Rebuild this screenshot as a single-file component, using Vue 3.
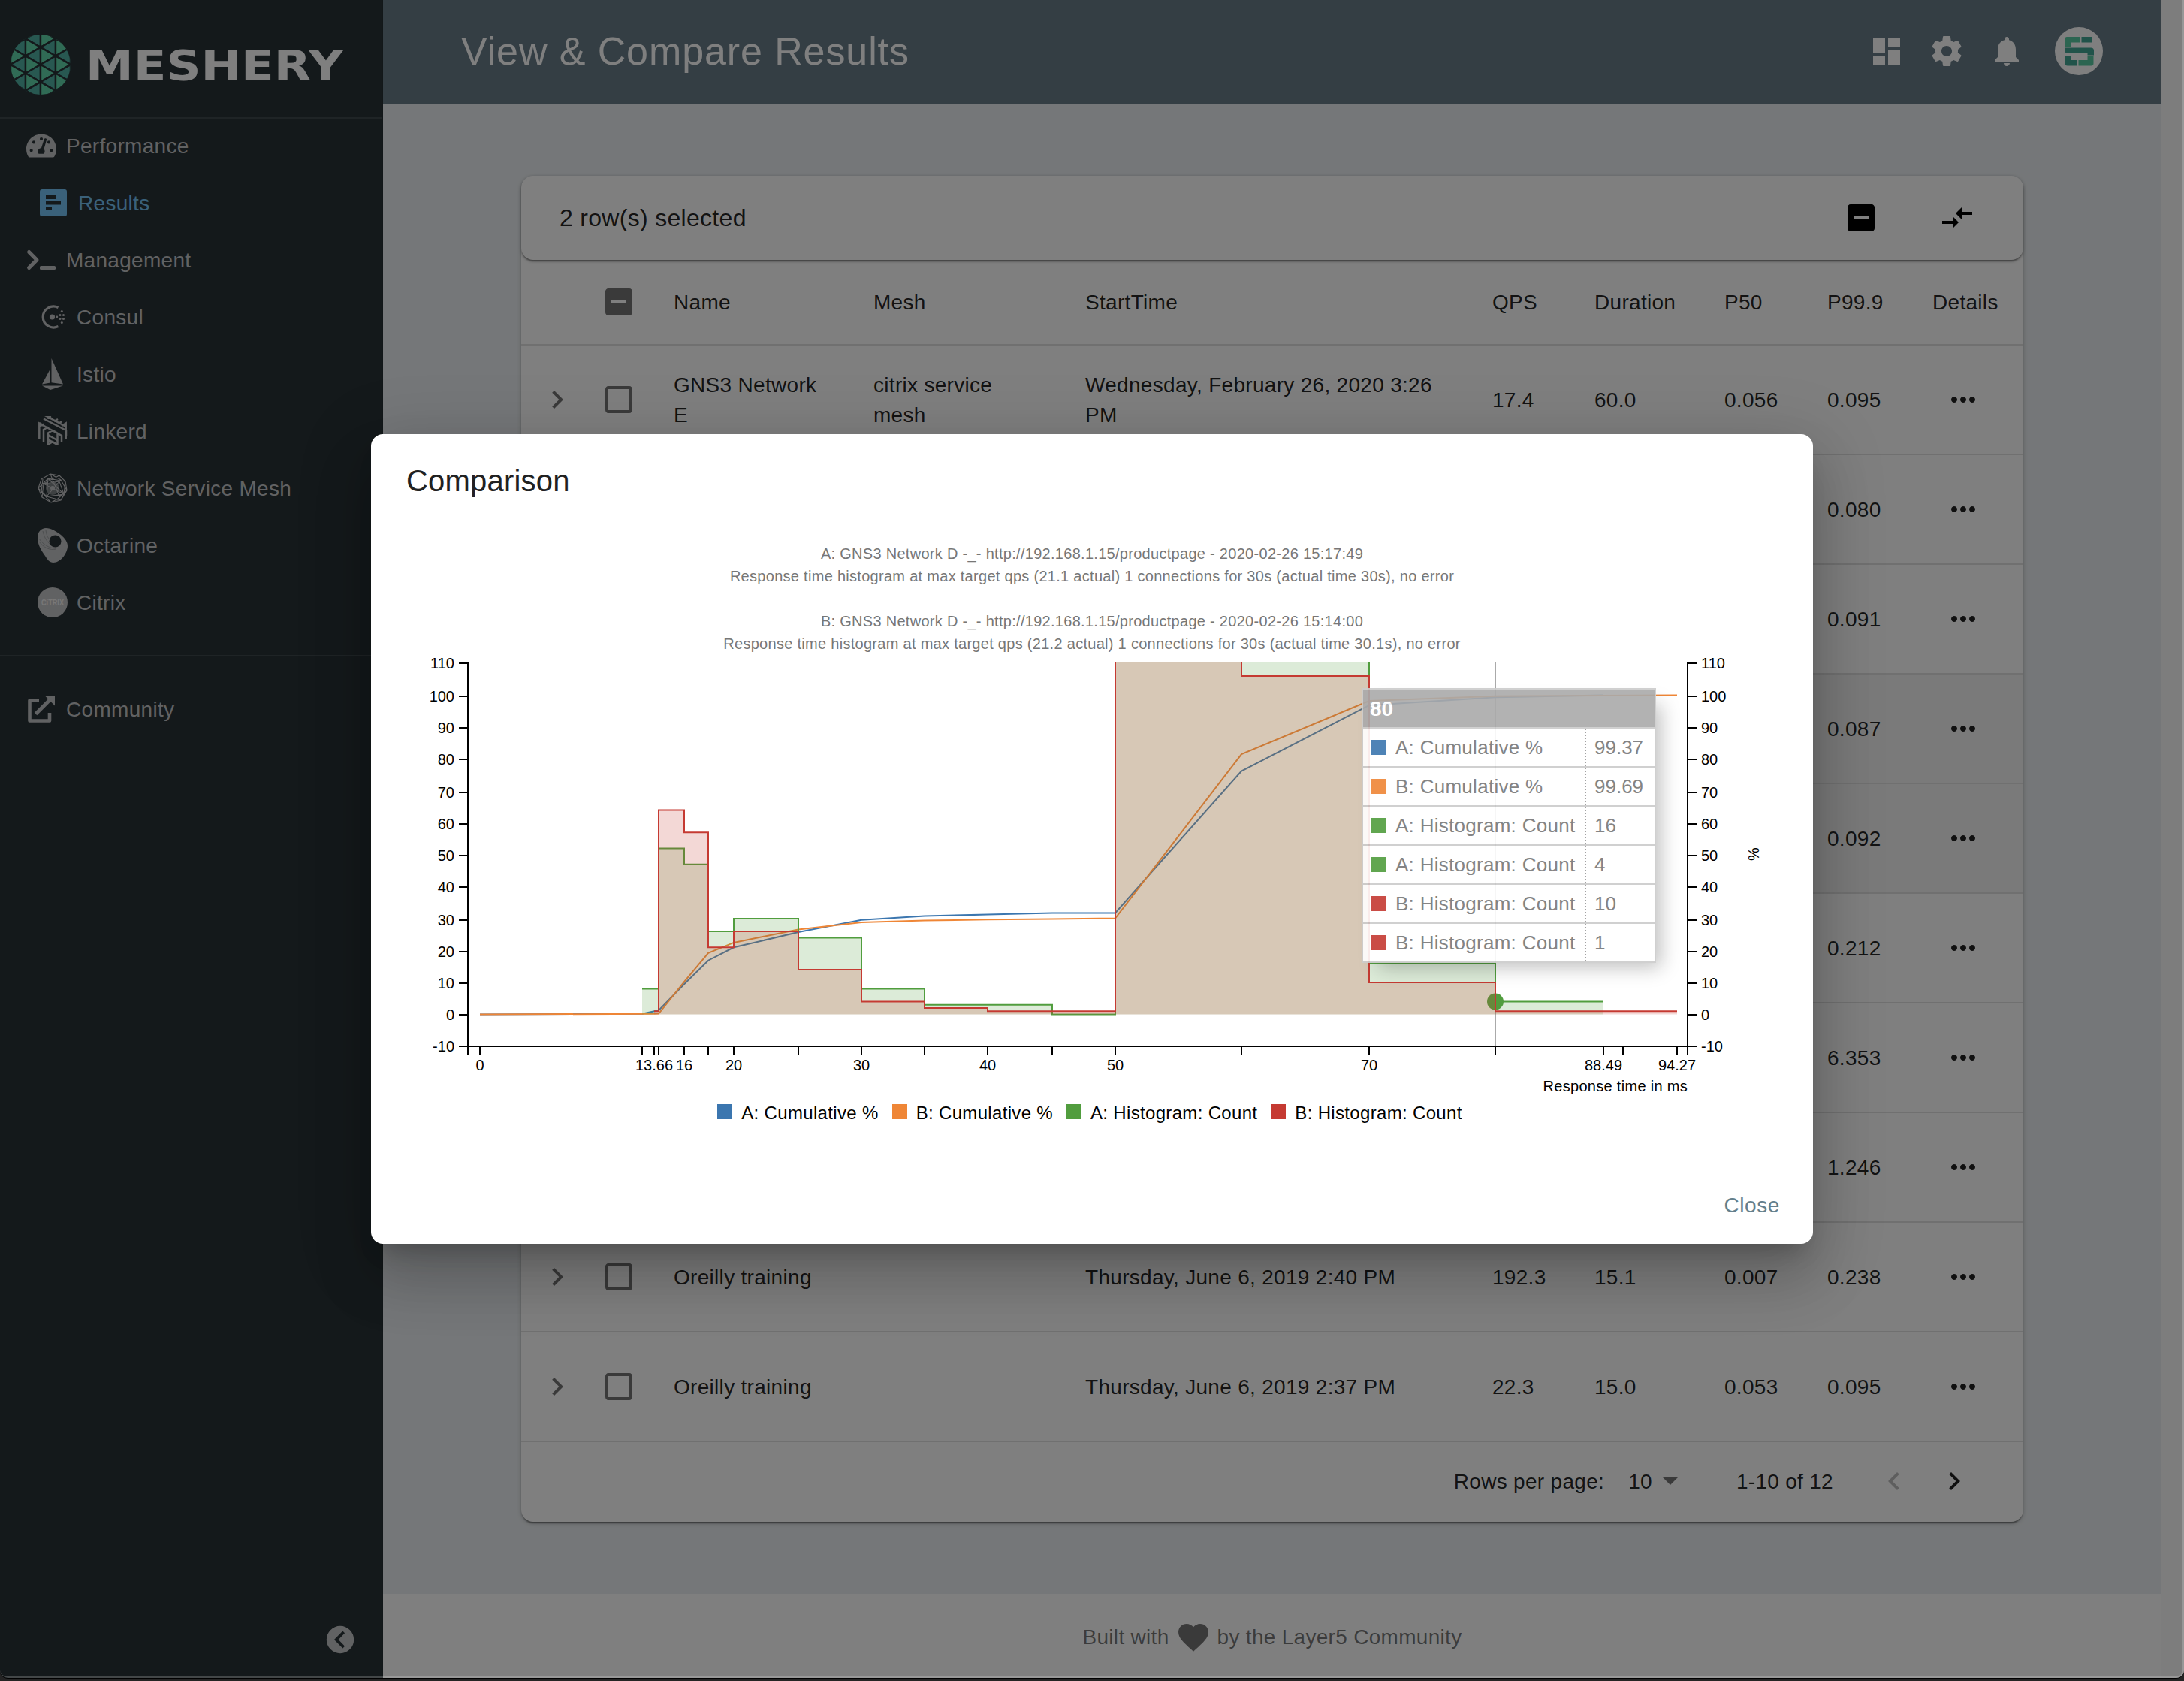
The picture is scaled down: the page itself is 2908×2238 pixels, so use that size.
<script setup>
const ICONS = {
  dashboard: 'M3 13h8V3H3v10zm0 8h8v-6H3v6zm10 0h8V11h-8v10zm0-18v6h8V3h-8z',
  settings: 'M19.43 12.98c.04-.32.07-.64.07-.98s-.03-.66-.07-.98l2.11-1.65c.19-.15.24-.42.12-.64l-2-3.46c-.12-.22-.39-.3-.61-.22l-2.49 1c-.52-.4-1.08-.73-1.69-.98l-.38-2.65C14.46 2.18 14.25 2 14 2h-4c-.25 0-.46.18-.49.42l-.38 2.65c-.61.25-1.17.59-1.69.98l-2.49-1c-.23-.09-.49 0-.61.22l-2 3.46c-.13.22-.07.49.12.64l2.11 1.65c-.04.32-.07.65-.07.98s.03.66.07.98l-2.11 1.65c-.19.15-.24.42-.12.64l2 3.46c.12.22.39.3.61.22l2.49-1c.52.4 1.08.73 1.69.98l.38 2.65c.03.24.24.42.49.42h4c.25 0 .46-.18.49-.42l.38-2.65c.61-.25 1.17-.59 1.69-.98l2.49 1c.23.09.49 0 .61-.22l2-3.46c.12-.22.07-.49-.12-.64l-2.11-1.65zM12 15.5c-1.93 0-3.5-1.57-3.5-3.5s1.57-3.5 3.5-3.5 3.5 1.57 3.5 3.5-1.57 3.5-3.5 3.5z',
  bell: 'M12 22c1.1 0 2-.9 2-2h-4c0 1.1.89 2 2 2zm6-6v-5c0-3.07-1.64-5.64-4.5-6.32V4c0-.83-.67-1.5-1.5-1.5s-1.5.67-1.5 1.5v.68C7.63 5.36 6 7.92 6 11v5l-2 2v1h16v-1l-2-2z',
  indeterminate: 'M19 3H5c-1.1 0-2 .9-2 2v14c0 1.1.9 2 2 2h14c1.1 0 2-.9 2-2V5c0-1.1-.9-2-2-2zm-2 10H7v-2h10v2z',
  unchecked: 'M19 5v14H5V5h14m0-2H5c-1.1 0-2 .9-2 2v14c0 1.1.9 2 2 2h14c1.1 0 2-.9 2-2V5c0-1.1-.9-2-2-2z',
  compare: 'M9.01 14H2v2h7.01v3L13 15l-3.99-4v3zm5.98-1v-3H22V8h-7.01V5L11 9l3.99 4z',
  right: 'M10 6L8.59 7.41 13.17 12l-4.58 4.59L10 18l6-6z',
  left: 'M15.41 7.41L14 6l-6 6 6 6 1.41-1.41L10.83 12z',
  more: 'M6 10c-1.1 0-2 .9-2 2s.9 2 2 2 2-.9 2-2-.9-2-2-2zm12 0c-1.1 0-2 .9-2 2s.9 2 2 2 2-.9 2-2-.9-2-2-2zm-6 0c-1.1 0-2 .9-2 2s.9 2 2 2 2-.9 2-2-.9-2-2-2z',
  heart: 'M12 21.35l-1.45-1.32C5.4 15.36 2 12.28 2 8.5 2 5.42 4.42 3 7.5 3c1.74 0 3.41.81 4.5 2.09C13.09 3.81 14.76 3 16.5 3 19.58 3 22 5.42 22 8.5c0 3.78-3.4 6.86-8.55 11.54L12 21.35z',
}

const meshes = [
  { id: 'consul', label: 'Consul' },
  { id: 'istio', label: 'Istio' },
  { id: 'linkerd', label: 'Linkerd' },
  { id: 'nsm', label: 'Network Service Mesh' },
  { id: 'octarine', label: 'Octarine' },
  { id: 'citrix', label: 'Citrix' },
]

const columns = ['Name', 'Mesh', 'StartTime', 'QPS', 'Duration', 'P50', 'P99.9']
const blank = ['', '', '', '', '', '']
const rows = [
  { cells: ['GNS3 Network E', 'citrix service mesh', 'Wednesday, February 26, 2020 3:26 PM', '17.4', '60.0', '0.056', '0.095'] },
  { cells: [...blank, '0.080'] },
  { cells: [...blank, '0.091'] },
  { cells: [...blank, '0.087'], selected: true },
  { cells: [...blank, '0.092'], selected: true },
  { cells: [...blank, '0.212'] },
  { cells: [...blank, '6.353'] },
  { cells: [...blank, '1.246'] },
  { cells: ['Oreilly training', '', 'Thursday, June 6, 2019 2:40 PM', '192.3', '15.1', '0.007', '0.238'] },
  { cells: ['Oreilly training', '', 'Thursday, June 6, 2019 2:37 PM', '22.3', '15.0', '0.053', '0.095'] },
]

/* Logo lattice: equilateral triangles in columns of 20px, clipped to a circle. */
const tri = []
const H = 23.1
for (let c = 0; c < 4; c++) {
  for (let k = -3; k < 4; k++) {
    const x0 = c * 20
    const x1 = x0 + 20
    const off = c % 2 === 0 ? 0 : H / 2
    const y = 40 + k * H + off
    tri.push({ p: `${x0},${y - H} ${x0},${y} ${x1},${y - H / 2}`, light: true })
    tri.push({ p: `${x1},${y - H / 2} ${x1},${y + H / 2} ${x0},${y}`, light: false })
  }
}

/* Chart geometry, relative to the dialog's top left corner. x snaps up to the 2px grid. */
const Y0 = 772.5
const sx = (v) => Math.ceil((143.7 + v * 16.9) / 2) * 2 + 1
const sy = (v) => Y0 - v * 4.25
const tickY = (v) => {
  if (v === 110) return 305
  if (v === -10) return 815
  return Math.ceil((sy(v) - 0.9) / 2) * 2 + 1
}

const yTicks = Array.from({ length: 13 }, (_, i) => i * 10 - 10)
const xTicks = [
  [0, '0'], [12.77, ''], [13.66, '13.66'], [14, ''], [16, '16'], [18, ''], [20, '20'], [25, ''],
  [30, '30'], [35, ''], [40, '40'], [45, ''], [50, '50'], [60, ''], [70, '70'], [80, ''],
  [88.49, '88.49'], [90, ''], [94.27, '94.27'],
]

const cumA = [[0, 0], [12.77, 0.16], [14, 1.26], [16, 9.48], [18, 16.9], [20, 21], [25, 25.75], [30, 29.6], [35, 30.8], [40, 31.3], [45, 31.8], [50, 31.8], [60, 76.2], [70, 96.84], [80, 99.37], [88.49, 100]]
const cumB = [[0, 0], [13.66, 0.16], [14, 0.2], [16, 10.2], [18, 19.2], [20, 22.5], [25, 26.6], [30, 28.8], [35, 29.4], [40, 29.7], [45, 29.9], [50, 30.1], [60, 81.5], [70, 98.2], [80, 99.69], [94.27, 100]]
const histA = [[12.77, 8], [14, 52], [16, 47], [18, 26], [20, 30], [25, 24], [30, 8], [35, 3], [45, 0], [50, 281], [60, 131], [70, 16], [80, 4], [88.49, 4]]
const histB = [[13.66, 1], [14, 64], [16, 57], [18, 21], [20, 26], [25, 14], [30, 4], [35, 2], [40, 1], [50, 328], [60, 106], [70, 10], [80, 1], [94.27, 1]]

const line = (pts) => 'M' + pts.map(([x, y]) => `${sx(x)} ${sy(y).toFixed(1)}`).join('L')
const step = (pts) =>
  pts.reduce((d, [x, y], i) => (i === 0 ? `M${sx(x)} ${sy(y)}` : `${d}H${sx(x)}V${sy(y)}`), '')
const area = (pts) => `${step(pts)}V${Y0}H${sx(pts[0][0])}Z`

const legend = [
  { c: 'blue', t: 'A: Cumulative %' },
  { c: 'orange', t: 'B: Cumulative %' },
  { c: 'green', t: 'A: Histogram: Count' },
  { c: 'red', t: 'B: Histogram: Count' },
]
const tip = [
  { c: 'blue', t: 'A: Cumulative %', v: '99.37' },
  { c: 'orange', t: 'B: Cumulative %', v: '99.69' },
  { c: 'green', t: 'A: Histogram: Count', v: '16' },
  { c: 'green', t: 'A: Histogram: Count', v: '4' },
  { c: 'red', t: 'B: Histogram: Count', v: '10' },
  { c: 'red', t: 'B: Histogram: Count', v: '1' },
]
</script>

<template>
  <div class="screen">
    <div class="window">
      <aside class="sidebar">
        <div class="brand">
          <svg class="brand-mark" viewBox="0 0 80 80">
            <clipPath id="disc"><circle cx="40" cy="40" r="40" /></clipPath>
            <g clip-path="url(#disc)">
              <polygon v-for="(t, i) in tri" :key="i" :points="t.p" :class="t.light ? 'tri-light' : 'tri-dark'" />
            </g>
          </svg>
          <svg class="brand-name" viewBox="0 0 340 60">
            <text x="-4" y="50" textLength="343" lengthAdjust="spacingAndGlyphs">MESHERY</text>
          </svg>
        </div>
        <nav class="nav">
          <div class="item">
            <svg class="ico" width="40" height="36" viewBox="0 0 576 512">
              <path fill-rule="evenodd" d="M288 32C129 32 0 161 0 320c0 53 14 102 39 145 6 10 16 15 27 15h444c11 0 21-5 27-15 25-43 39-92 39-145C576 161 447 32 288 32zM288 96a30 30 0 1 1 0 60 30 30 0 0 1 0-60zM96 376a30 30 0 1 1 0-60 30 30 0 0 1 0 60zM144 220a30 30 0 1 1 0-60 30 30 0 0 1 0 60zM480 376a30 30 0 1 1 0-60 30 30 0 0 1 0 60zM432 220a30 30 0 1 1 0-60 30 30 0 0 1 0 60zM390 140l-52 180c10 11 16 25 16 40 0 18-4 36-14 50H236c-9-14-13-32-12-50 2-32 28-56 64-60l56-172c8-22 52-12 46 12z" />
            </svg>
            <span class="main-label">Performance</span>
          </div>
          <div class="item sub active">
            <svg class="ico" width="36" height="36" viewBox="0 0 36 36">
              <path fill-rule="evenodd" d="M3 0h30a3 3 0 0 1 3 3v30a3 3 0 0 1-3 3H3a3 3 0 0 1-3-3V3a3 3 0 0 1 3-3zM8 8v5h13V8zM8 15.5v5h20v-5zM8 23v5h8v-5z" />
            </svg>
            <span>Results</span>
          </div>
          <div class="item">
            <svg class="ico" width="40" height="32" viewBox="0 0 40 32">
              <path d="M3.600 5.500L14 16 3.600 26.500" fill="none" stroke="currentColor" stroke-width="5" stroke-linecap="round" stroke-linejoin="round" />
              <rect x="18" y="24" width="21" height="5" rx="1.500" />
            </svg>
            <span class="main-label">Management</span>
          </div>
          <div v-for="m in meshes" :key="m.id" class="item sub">
            <svg v-if="m.id === 'consul'" class="ico" width="40" height="40" viewBox="0 0 40 40">
              <path d="M27.500 7.500A14 14 0 1 0 27.500 32.500" fill="none" stroke="currentColor" stroke-width="3.200" />
              <circle cx="19.500" cy="20" r="3.600" /><circle cx="25.800" cy="20" r="1.400" />
              <circle cx="30" cy="17.500" r="1.500" /><circle cx="30" cy="22.500" r="1.500" />
              <circle cx="34.500" cy="17.500" r="1.500" /><circle cx="34.500" cy="22.500" r="1.500" />
              <circle cx="32.300" cy="12.500" r="1.500" /><circle cx="32.300" cy="27.500" r="1.500" />
            </svg>
            <svg v-else-if="m.id === 'istio'" class="ico" width="40" height="42" viewBox="0 0 40 42">
              <path d="M18.500 0L34 34.500 18.500 32.300zM17 14v18.500L6 34.500zM6 36.500h28L17 42z" />
            </svg>
            <svg v-else-if="m.id === 'linkerd'" class="ico" width="40" height="40" viewBox="0 0 40 40">
              <g fill="none" stroke="currentColor" stroke-width="2.500">
                <path d="M2.300 30V9.500L32 26v9M2.300 14L8 10.500M2.300 9l5 3M8 34V18l6-3.500M14 38V22.500l6-3.500 6.500 3.800V38M14 25l12 7M14 31l12 7M14 38l6-4 6 4M37.700 30V9.500L32 13M37.700 14L8 -2M38 26V19L8 3.500M22 7l5-3M27.500 10l5-3M13 3l5-2.500" />
              </g>
            </svg>
            <svg v-else-if="m.id === 'nsm'" class="ico" width="40" height="40" viewBox="0 0 40 40">
              <circle cx="20" cy="20" r="9" opacity=".55" />
              <circle cx="20" cy="20" r="3" />
              <g fill="none" stroke="currentColor" stroke-width="1.100">
                <path d="M17 1L5 8 1 20l5 12 12 7 13-3 8-13-2-12-8-8zM17 1l14 8 8 14M5 8l12-7 12 30M1 20L14 7l23 4M6 32L8 14 29 3M18 39L5 25l2-17M31 36L12 31 1 20M39 23L27 34 18 39M37 11l-2 17-4 8M8 14l21-3 6 17-23 3-7-6M14 7l21 21M29 11L12 31M12 31L14 7M8 14l27 14" />
              </g>
            </svg>
            <svg v-else-if="m.id === 'octarine'" class="ico" width="40" height="46" viewBox="0 0 40 46">
              <path fill-rule="evenodd" d="M0 13C0 5 5 0 11 0c7 0 15 5 20 9 6 5 9 10 9 15 0 9-9 22-19 22-5 0-8-4-11-9C5 30 0 22 0 13zM31.500 17.500a8 8 0 1 0-16 0 8 8 0 0 0 16 0z" />
              <path d="M2 14c5 8 14 13 22 13M2 18c6 8 14 12 23 10M7 4c2 8 4 12 9 17M11 3c1 6 2 9 5 12" fill="none" class="groove" />
            </svg>
            <svg v-else class="ico" width="40" height="40" viewBox="0 0 40 40">
              <circle cx="20" cy="20" r="20" />
              <text class="citrix" x="20" y="23.500" textLength="30" lengthAdjust="spacingAndGlyphs">CiTRIX</text>
            </svg>
            <span>{{ m.label }}</span>
          </div>
        </nav>
        <div class="item community">
          <svg class="ico" width="40" height="40" viewBox="0 0 40 40">
            <path d="M17 8.500H4.500v27h26.500V25" fill="none" stroke="currentColor" stroke-width="4.600" stroke-linejoin="round" />
            <path d="M12.500 26.500L32 7" stroke="currentColor" stroke-width="5" />
            <path d="M24.500 2H38v13.500z" />
          </svg>
          <span class="main-label">Community</span>
        </div>
        <svg class="collapse" width="38" height="38" viewBox="0 0 38 38">
          <path fill-rule="evenodd" d="M19 .8a18.200 18.200 0 1 1 0 36.400A18.200 18.200 0 0 1 19 .8zM22.300 7.400L11 19l11.300 11.600 2.800-2.800-8.500-8.800 8.500-8.800z" />
        </svg>
      </aside>

      <div class="page">
        <header class="appbar">
          <h1>View &amp; Compare Results</h1>
          <div class="actions">
            <svg class="mi" viewBox="0 0 24 24"><path :d="ICONS.dashboard" /></svg>
            <svg class="mi" viewBox="0 0 24 24"><path :d="ICONS.settings" /></svg>
            <svg class="mi" viewBox="0 0 24 24"><path :d="ICONS.bell" /></svg>
            <svg class="avatar" viewBox="0 0 64 64">
              <circle cx="32" cy="32" r="32" class="av-bg" />
              <path class="av-a" d="M16 13h17.500v7.500H22V26h-8.500V15.500a2.500 2.500 0 0 1 2.500-2.500zM31.500 44H43.500V39h8v9.500a3 3 0 0 1-3 3H31.500z" />
              <path class="av-b" d="M35.500 13H50v7.500H35.500zM13.500 27.500H48a4 4 0 0 1 4 4v6h-8.500V35H17a3.500 3.500 0 0 1-3.500-3.500zM13.500 39h8.500v5h7.500v7.500H17a3.500 3.500 0 0 1-3.500-3.500z" />
            </svg>
          </div>
        </header>

        <main class="content">
          <section class="card">
            <div class="toolbar">
              <span class="selected-count">2 row(s) selected</span>
              <svg class="mi" viewBox="0 0 24 24"><path :d="ICONS.indeterminate" /></svg>
              <svg class="mi compare" viewBox="0 0 24 24"><path :d="ICONS.compare" /></svg>
            </div>
            <div class="row head">
              <div></div>
              <svg class="mi muted" viewBox="0 0 24 24"><path :d="ICONS.indeterminate" /></svg>
              <div v-for="c in columns" :key="c" class="cell">{{ c }}</div>
              <div class="cell">Details</div>
            </div>
            <div v-for="(r, i) in rows" :key="i" class="row" :class="{ picked: r.selected }">
              <svg class="mi muted expand" viewBox="0 0 24 24"><path :d="ICONS.right" /></svg>
              <svg class="mi muted" viewBox="0 0 24 24"><path :d="ICONS.unchecked" /></svg>
              <div v-for="(c, j) in r.cells" :key="j" class="cell">{{ c }}</div>
              <svg class="mi dots" viewBox="0 0 24 24"><path :d="ICONS.more" /></svg>
            </div>
            <div class="pager">
              <span class="per">Rows per page:</span>
              <span class="size">10</span>
              <svg class="caret" viewBox="0 0 20 10"><path d="M0 0h20L10 10z" /></svg>
              <span class="range">1-10 of 12</span>
              <svg class="mi off" viewBox="0 0 24 24"><path :d="ICONS.left" /></svg>
              <svg class="mi next" viewBox="0 0 24 24"><path :d="ICONS.right" /></svg>
            </div>
          </section>
        </main>

        <footer class="footer">
          <span>Built with</span>
          <svg class="mi" viewBox="0 0 24 24"><path :d="ICONS.heart" /></svg>
          <span>by the Layer5 Community</span>
        </footer>
      </div>
      <div class="scrollbar"></div>

      <div class="backdrop"></div>
      <div class="frame"></div>

      <div class="dialog">
        <h2>Comparison</h2>
        <div class="captions">
          <p>A: GNS3 Network D -_- http://192.168.1.15/productpage - 2020-02-26 15:17:49</p>
          <p>Response time histogram at max target qps (21.1 actual) 1 connections for 30s (actual time 30s), no error</p>
          <p class="gap">B: GNS3 Network D -_- http://192.168.1.15/productpage - 2020-02-26 15:14:00</p>
          <p>Response time histogram at max target qps (21.2 actual) 1 connections for 30s (actual time 30.1s), no error</p>
        </div>

        <!-- viewBox keeps dialog coordinates; the drawing starts 290px below its top -->
        <svg class="chart" width="1920" height="600" viewBox="0 290 1920 600">
          <clipPath id="plot"><rect x="129" y="303" width="1624" height="512" /></clipPath>
          <g clip-path="url(#plot)">
            <path class="focus" d="M1497 303V815" />
            <path class="s blue" :d="line(cumA)" />
            <path class="s orange" :d="line(cumB)" />
            <path class="a green" :d="area(histA)" />
            <path class="s green" :d="step(histA)" />
            <circle class="f green" cx="1497" cy="755.500" r="11" />
            <path class="a red" :d="area(histB)" />
            <path class="s red" :d="step(histB)" />
          </g>
          <path class="axis" d="M117 305H129V815H117M129 827V815H1753V827M1765 305H1753V815H1765" />
          <g v-for="t in yTicks" :key="t">
            <path class="axis" :d="`M117 ${tickY(t)}H129M1753 ${tickY(t)}H1765`" />
            <text class="tick end" x="111" :y="tickY(t) + 6.500">{{ t }}</text>
            <text class="tick" x="1771" :y="tickY(t) + 6.500">{{ t }}</text>
          </g>
          <g v-for="[v, l] in xTicks" :key="v">
            <path class="axis" :d="`M${sx(v)} 815V827`" />
            <text v-if="l" class="tick mid" :x="sx(v)" y="847">{{ l }}</text>
          </g>
          <text class="tick end title" x="1753" y="874.500">Response time in ms</text>
          <text class="tick mid" transform="translate(1847.500 559) rotate(-90)">%</text>
        </svg>

        <div class="legend">
          <div v-for="l in legend" :key="l.t" class="entry">
            <i class="swatch" :class="l.c"></i><span>{{ l.t }}</span>
          </div>
        </div>
        <div class="buttons"><span>Close</span></div>

        <div class="tooltip">
          <div class="tip-head">80</div>
          <div v-for="(t, i) in tip" :key="i" class="tip-row">
            <div class="tip-name"><i class="swatch" :class="t.c"></i><span>{{ t.t }}</span></div>
            <div class="tip-value">{{ t.v }}</div>
          </div>
        </div>
      </div>
    </div>
  </div>
</template>

<style>
body {
  background: #242424;
}
</style>

<style scoped>
.screen {
  width: 2908px;
  height: 2238px;
  overflow: hidden;
  background: #242424;
  font-family: "Liberation Sans", Arial, sans-serif;
  font-size: 28px;
  letter-spacing: 0.3px;
  box-sizing: border-box;
}
.screen * {
  box-sizing: border-box;
}
.window {
  position: relative;
  display: flex;
  width: 2908px;
  height: 2234px;
  border-radius: 0 0 10px 10px;
  overflow: hidden;
  box-shadow: 0 1px 0 #000;
}
svg {
  display: block;
  flex: none;
}
.mi {
  width: 48px;
  height: 48px;
  fill: currentColor;
}

/* Sidebar */
.sidebar {
  width: 510px;
  display: flex;
  flex-direction: column;
  background: #293337;
  border-right: 2px solid #252e32;
  color: #c3c4c6;
}
.brand {
  height: 158px;
  padding: 46px 0 0 14px;
  display: flex;
  border-bottom: 2px solid #3f484c;
}
.brand-mark {
  width: 80px;
  height: 80px;
}
.tri-light,
.tri-dark {
  stroke: #293337;
  stroke-width: 2.4;
}
.tri-light {
  fill: #60d6aa;
}
.tri-dark {
  fill: #50b0a2;
}
.brand-name {
  width: 340px;
  height: 60px;
  margin: 10px 0 0 24px;
  overflow: visible;
  font-family: "DejaVu Sans", sans-serif;
  font-weight: bold;
  font-size: 55px;
  letter-spacing: 0;
  fill: #fff;
}
.nav {
  height: 718px;
  margin-top: -2px;
  padding-bottom: 34px;
  border-bottom: 2px solid #3f484c;
  margin-bottom: 32px;
}
.item {
  height: 76px;
  padding-left: 35px;
  display: flex;
  align-items: center;
}
.ico {
  fill: currentColor;
}
.item span {
  margin-left: 12px;
  padding-top: 2px;
}
.item .main-label {
  margin-left: 13px;
}
.sub {
  padding-left: 50px;
}
.active {
  padding-left: 53px;
  color: #74c2f4;
}
.active span {
  margin-left: 15px;
}
.groove {
  stroke: #8f9497;
  stroke-width: 0.8;
}
.citrix {
  font-size: 11px;
  font-weight: bold;
  letter-spacing: 0;
  text-anchor: middle;
  fill: #f0f0f0;
}
.collapse {
  margin: auto 36px 32px auto;
  fill: #c3c4c6;
}

/* Page */
.page {
  width: 2368px;
  display: flex;
  flex-direction: column;
  background: #ebeff2;
}
.appbar {
  height: 138px;
  padding: 0 78px 2px 104px;
  display: flex;
  align-items: center;
  justify-content: space-between;
  background: #687c88;
  color: #fff;
}
h1 {
  margin: 0;
  font-size: 52px;
  font-weight: 400;
  letter-spacing: 0.9px;
}
.actions {
  display: flex;
  align-items: center;
  gap: 32px;
}
.avatar {
  width: 64px;
  height: 64px;
  margin-left: 8px;
}
.av-bg {
  fill: #fff;
}
.av-a {
  fill: #58cba2;
}
.av-b {
  fill: #43a694;
}
.content {
  flex: 1;
  padding: 96px 184px 0;
}
.card {
  height: 1792px;
  border-radius: 16px;
  background: #fff;
  color: rgba(0, 0, 0, 0.87);
  box-shadow: 0 2px 6px rgba(0, 0, 0, 0.2), 0 2px 2px rgba(0, 0, 0, 0.14), 0 4px 2px -2px rgba(0, 0, 0, 0.3);
}
.toolbar {
  height: 112px;
  padding: 0 64px 0 51px;
  display: flex;
  align-items: center;
  border-radius: 16px;
  box-shadow: 0 2px 4px rgba(0, 0, 0, 0.22), 0 3px 2px -1px rgba(0, 0, 0, 0.35);
  color: #000;
}
.selected-count {
  flex: 1;
  font-size: 32px;
  color: rgba(0, 0, 0, 0.87);
}
.compare {
  margin-left: 80px;
}
.row {
  height: 146px;
  display: grid;
  grid-template-columns: 106px 97px 266px 282px 542px 136px 173px 137px 140px 121px;
  align-items: center;
  border-bottom: 2px solid #e0e0e0;
  line-height: 40px;
}
.row.head {
  height: 114px;
}
.picked {
  background: #f4f4f4;
}
.cell {
  padding: 2px 54px 0 0;
}
.cell:nth-child(n + 6) {
  padding-right: 0;
}
.muted {
  color: rgba(0, 0, 0, 0.54);
}
.expand {
  margin-left: 24px;
}
.dots {
  margin-left: 17px;
}
.pager {
  height: 106px;
  padding-right: 68px;
  display: flex;
  align-items: center;
  justify-content: flex-end;
}
.pager .mi {
  margin-top: -2px;
}
.size {
  margin-left: 32px;
}
.caret {
  width: 20px;
  height: 10px;
  margin-left: 14px;
  margin-top: -2px;
  fill: rgba(0, 0, 0, 0.54);
}
.range {
  margin: 0 57px 0 78px;
}
.off {
  color: rgba(0, 0, 0, 0.26);
}
.next {
  margin-left: 32px;
}
.footer {
  height: 112px;
  display: flex;
  align-items: center;
  justify-content: center;
  gap: 8px;
  padding-top: 4px;
  background: #fff;
  color: rgba(0, 0, 0, 0.54);
}
.scrollbar {
  width: 30px;
  background: #fafafa;
}
.backdrop,
.frame {
  position: absolute;
  inset: 0;
  background: rgba(0, 0, 0, 0.5);
}
.frame {
  background: none;
  border: solid rgba(255, 255, 255, 0.2);
  border-width: 0 2px 2px 0;
  border-radius: 0 0 10px 10px;
}

/* Dialog */
.dialog {
  position: absolute;
  left: 494px;
  top: 578px;
  width: 1920px;
  height: 1078px;
  display: flex;
  flex-direction: column;
  border-radius: 16px;
  background: #fff;
  box-shadow: 0 22px 30px -14px rgba(0, 0, 0, 0.2), 0 48px 76px 6px rgba(0, 0, 0, 0.14), 0 18px 92px 16px rgba(0, 0, 0, 0.12);
}
h2 {
  margin: 0;
  height: 142px;
  padding: 37px 0 0 47px;
  font-size: 40px;
  line-height: 50px;
  font-weight: 400;
  letter-spacing: 0.2px;
  color: #212121;
}
.captions {
  height: 148px;
  padding-top: 2px;
  text-align: center;
  font-size: 20px;
  line-height: 30px;
  letter-spacing: 0.29px;
  color: #777;
}
.captions p {
  margin: 0;
}
.captions .gap {
  margin-top: 30px;
}
.chart {
  font-size: 20px;
  letter-spacing: 0;
}
.tick {
  fill: #000;
}
.title {
  letter-spacing: 0.3px;
}
.end {
  text-anchor: end;
}
.mid {
  text-anchor: middle;
}
.axis {
  fill: none;
  stroke: #000;
  stroke-width: 2;
}
.focus {
  stroke: #aaa;
  stroke-width: 2;
}
.blue {
  --c: #3b76af;
}
.orange {
  --c: #ef8636;
}
.green {
  --c: #519d3e;
}
.red {
  --c: #c53a32;
}
.s {
  fill: none;
  stroke: var(--c);
  stroke-width: 2;
}
.a {
  fill: var(--c);
  opacity: 0.2;
}
.f {
  fill: var(--c);
}
.swatch {
  display: block;
  width: 20px;
  height: 20px;
  background: var(--c);
}
.legend {
  margin-top: 2px;
  height: 24px;
  padding-right: 6px;
  display: flex;
  justify-content: center;
  align-items: flex-start;
  gap: 18px;
  font-size: 24px;
  line-height: 24px;
  letter-spacing: 0.33px;
  color: #000;
}
.entry {
  display: flex;
  gap: 12px;
}
.buttons {
  margin-top: auto;
  padding: 0 44px 35px 0;
  text-align: right;
  line-height: 32px;
  letter-spacing: 0.6px;
  color: #647f8d;
}
.tooltip {
  position: absolute;
  left: 1319px;
  top: 338px;
  width: 392px;
  border: 2px solid #ccc;
  border-bottom: 0;
  opacity: 0.9;
  background: #fff;
  color: #777;
  font-size: 26px;
  letter-spacing: 0;
  box-shadow: 14px 14px 24px -8px rgba(0, 0, 0, 0.28);
}
.tip-head {
  height: 52px;
  padding-left: 9px;
  border-bottom: 2px solid #ccc;
  background: #aaa;
  color: #fff;
  font-size: 28px;
  font-weight: bold;
  line-height: 52px;
}
.tip-row {
  height: 52px;
  display: flex;
  border-bottom: 2px solid #ccc;
  line-height: 50px;
}
.tip-name {
  width: 295px;
  padding-left: 11px;
  display: flex;
  align-items: center;
  gap: 12px;
  letter-spacing: 0.28px;
}
.tip-value {
  flex: 1;
  padding-left: 11px;
  border-left: 2px dotted #999;
}
</style>
